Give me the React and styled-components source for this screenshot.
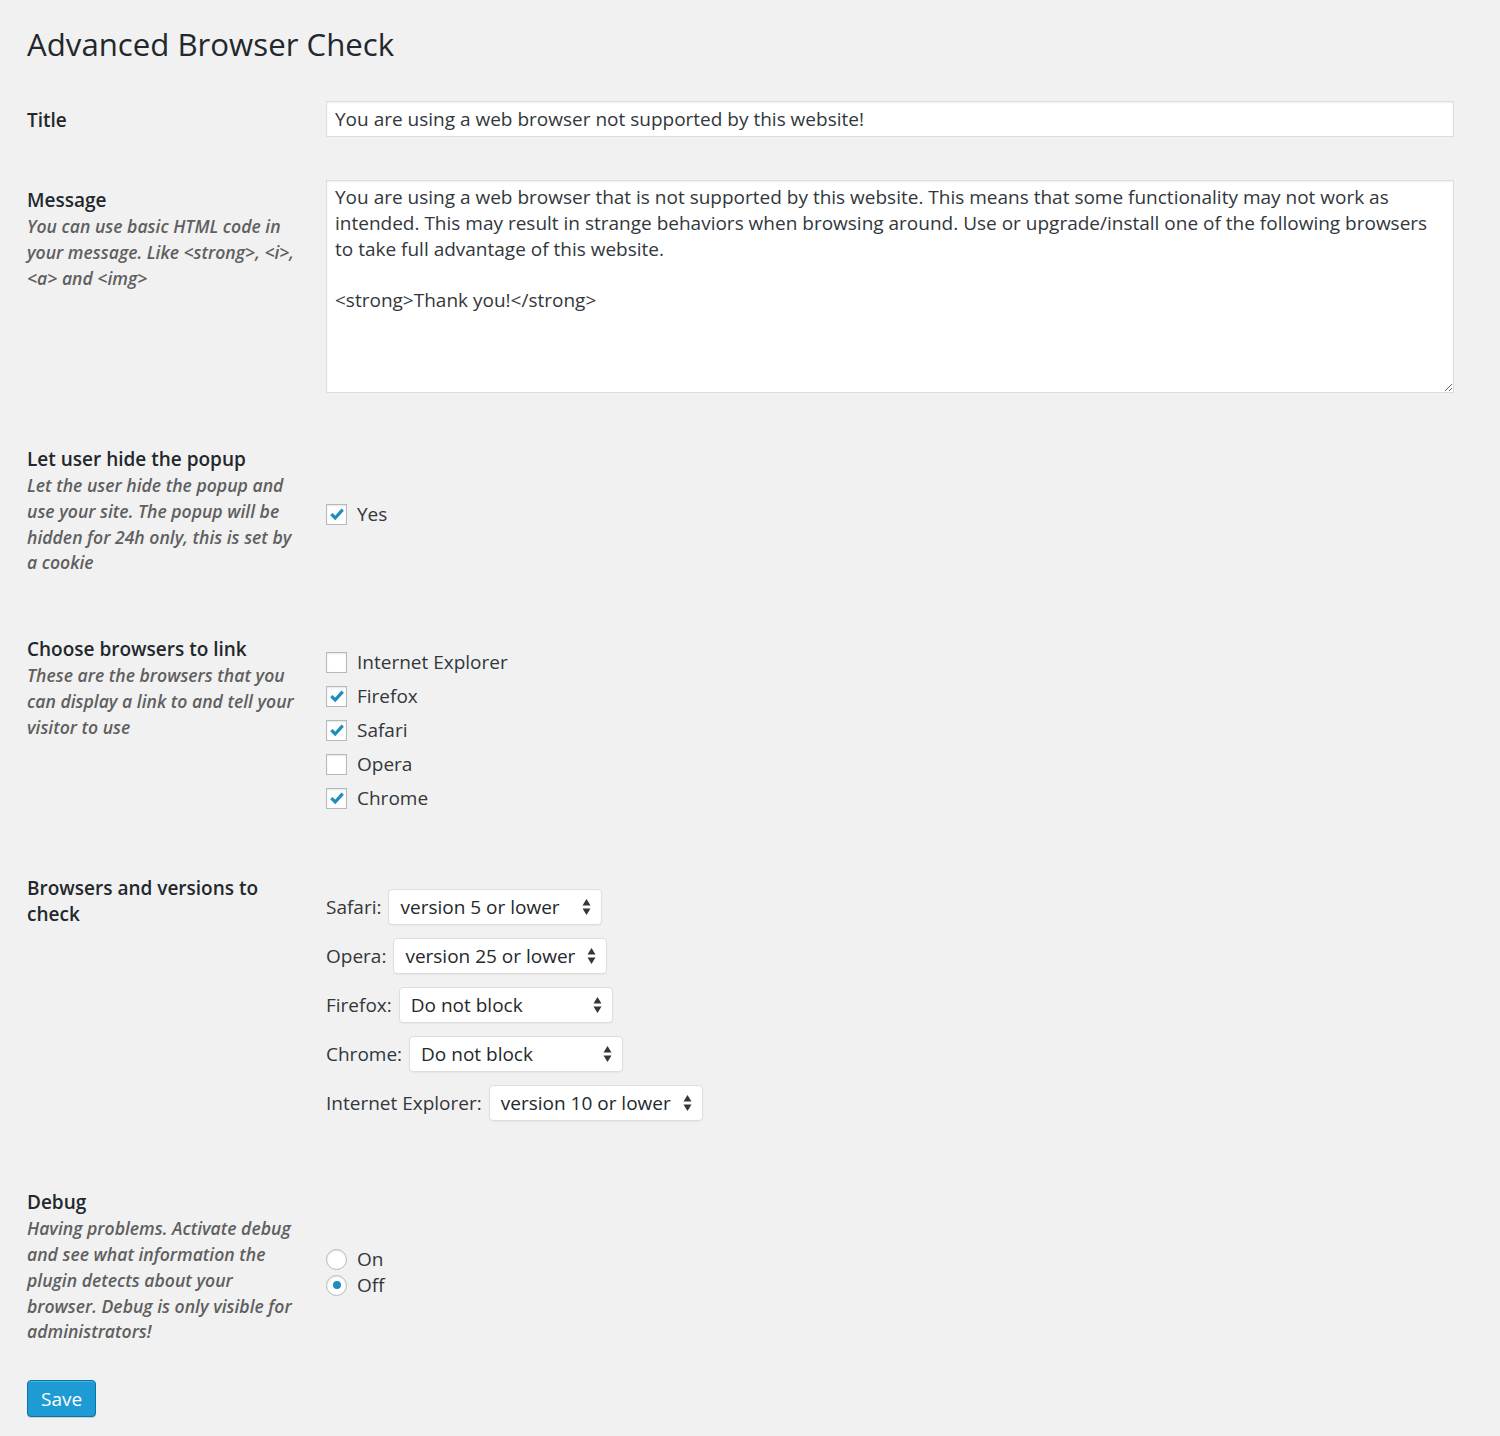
import React from 'react'
import styled, { createGlobalStyle } from 'styled-components'

const GlobalStyle = createGlobalStyle`
  html, body {
    margin: 0;
    padding: 0;
    background: #f1f1f1;
  }
  body {
    font-family: "Open Sans", "DejaVu Sans", sans-serif;
    font-size: 19px;
    color: #32373c;
  }
`

const Wrap = styled.div`
  padding: 0 46px 20px 27px;
`

const Heading = styled.h1`
  margin: 0 0 14px;
  padding-top: 22px;
  font-size: 31.2px;
  line-height: 44px;
  font-weight: 400;
  color: #23282d;
`

const Row = styled.div`
  display: grid;
  grid-template-columns: 299px 1fr;
  align-items: start;
`

const Head = styled.div`
  padding: 27px 29px ${p => p.$pb || 0}px 0;
`

const Label = styled.div`
  font-weight: 600;
  line-height: 26px;
  color: #23282d;
`

const Desc = styled.div`
  margin-top: 1px;
  font-style: italic;
  line-height: 25.8px;
  color: #5f5f5f;
  font-weight: 600;
  font-size: 17.6px;
`

const Field = styled.div`
  padding: ${p => p.$pad || '0'};
  align-self: ${p => p.$center ? 'center' : 'start'};
`

const TextInput = styled.input`
  box-sizing: border-box;
  width: 100%;
  height: 36px;
  margin: 0;
  padding: 0 8px;
  border: 1px solid #ddd;
  box-shadow: inset 0 1px 2px rgba(0, 0, 0, 0.07);
  background: #fff;
  font: inherit;
  color: #32373c;
  outline: none;
`

const TextArea = styled.textarea`
  display: block;
  box-sizing: border-box;
  width: 100%;
  height: 213px;
  margin: 0;
  padding: 4px 8px;
  border: 1px solid #ddd;
  box-shadow: inset 0 1px 2px rgba(0, 0, 0, 0.07);
  background: #fff;
  font: inherit;
  line-height: 25.8px;
  color: #32373c;
  outline: none;
`

const CheckList = styled.div`
  display: flex;
  flex-direction: column;
`

const Option = styled.label`
  display: flex;
  align-items: center;
  gap: 10px;
  height: ${p => p.$h || 34}px;
  line-height: 26px;
  color: #32373c;
`

const Box = styled.span`
  box-sizing: border-box;
  width: 21px;
  height: 21px;
  display: flex;
  align-items: center;
  justify-content: center;
  border: 1px solid #b4b9be;
  border-radius: ${p => p.$round ? '50%' : '0'};
  background: #fff;
  box-shadow: inset 0 1px 2px rgba(0, 0, 0, 0.1);
  flex-shrink: 0;
`

const Dot = styled.span`
  width: 8px;
  height: 8px;
  border-radius: 50%;
  background: #1e8cbe;
`

const SelectList = styled.div`
  display: flex;
  flex-direction: column;
  gap: 13px;
`

const SelectRow = styled.div`
  display: flex;
  align-items: center;
  gap: 7px;
  color: #32373c;
`

const Select = styled.div`
  box-sizing: border-box;
  width: 214px;
  height: 36px;
  display: flex;
  align-items: center;
  justify-content: space-between;
  padding: 0 10px 0 11px;
  border: 1px solid #ddd;
  border-radius: 4px;
  background: #fff;
  box-shadow: 0 1px 1px rgba(0, 0, 0, 0.04);
  color: #23282d;
`

const SaveButton = styled.button`
  margin-top: 26px;
  height: 37px;
  padding: 0 13px;
  border: 1px solid #0a74a8;
  border-radius: 4px;
  background: #1e9ad4;
  box-shadow: inset 0 1px 0 rgba(120, 200, 230, 0.5), 0 1px 0 rgba(0, 0, 0, 0.15);
  color: #fff;
  font: inherit;
  font-size: 19px;
  line-height: 34px;
  cursor: pointer;
`

function Check({ checked }) {
  return (
    <Box>
      {checked && (
        <svg width="16" height="16" viewBox="0 0 16 16">
          <path d="M2.3 8.2 L6.2 12 L13.7 3.6" fill="none" stroke="#1e8cbe" strokeWidth="3.2" strokeLinejoin="miter" />
        </svg>
      )}
    </Box>
  )
}

function Arrows() {
  return (
    <svg width="9" height="18" viewBox="0 0 9 18">
      <path d="M4.5 1 L8.5 7.5 L0.5 7.5 Z" fill="#32373c" />
      <path d="M4.5 17 L8.5 10.5 L0.5 10.5 Z" fill="#32373c" />
    </svg>
  )
}

const message = `You are using a web browser that is not supported by this website. This means that some functionality may not work as intended. This may result in strange behaviors when browsing around. Use or upgrade/install one of the following browsers to take full advantage of this website.

<strong>Thank you!</strong>`

const browsers = [
  { name: 'Internet Explorer', on: false },
  { name: 'Firefox', on: true },
  { name: 'Safari', on: true },
  { name: 'Opera', on: false },
  { name: 'Chrome', on: true },
]

const versions = [
  { name: 'Safari:', value: 'version 5 or lower' },
  { name: 'Opera:', value: 'version 25 or lower' },
  { name: 'Firefox:', value: 'Do not block' },
  { name: 'Chrome:', value: 'Do not block' },
  { name: 'Internet Explorer:', value: 'version 10 or lower' },
]

export default function App() {
  return (
    <Wrap>
      <GlobalStyle />
      <Heading>Advanced Browser Check</Heading>

      <Row>
        <Head>
          <Label>Title</Label>
        </Head>
        <Field $pad="21px 0 23px">
          <TextInput defaultValue="You are using a web browser not supported by this website!" />
        </Field>
      </Row>

      <Row>
        <Head>
          <Label>Message</Label>
          <Desc>You can use basic HTML code in your message. Like &lt;strong&gt;, &lt;i&gt;, &lt;a&gt; and &lt;img&gt;</Desc>
        </Head>
        <Field $pad="20px 0 26px">
          <TextArea defaultValue={message} />
        </Field>
      </Row>

      <Row>
        <Head $pb={33}>
          <Label>Let user hide the popup</Label>
          <Desc>Let the user hide the popup and use your site. The popup will be hidden for 24h only, this is set by a cookie</Desc>
        </Head>
        <Field $center>
          <Option $h={26}>
            <Check checked />
            Yes
          </Option>
        </Field>
      </Row>

      <Row>
        <Head>
          <Label>Choose browsers to link</Label>
          <Desc>These are the browsers that you can display a link to and tell your visitor to use</Desc>
        </Head>
        <Field $pad="36px 0 33px">
          <CheckList>
            {browsers.map(b => (
              <Option key={b.name}>
                <Check checked={b.on} />
                {b.name}
              </Option>
            ))}
          </CheckList>
        </Field>
      </Row>

      <Row>
        <Head>
          <Label>Browsers and versions to check</Label>
        </Head>
        <Field $pad="41px 0">
          <SelectList>
            {versions.map(v => (
              <SelectRow key={v.name}>
                {v.name}
                <Select>
                  <span>{v.value}</span>
                  <Arrows />
                </Select>
              </SelectRow>
            ))}
          </SelectList>
        </Field>
      </Row>

      <Row>
        <Head $pb={9}>
          <Label>Debug</Label>
          <Desc>Having problems. Activate debug and see what information the plugin detects about your browser. Debug is only visible for administrators!</Desc>
        </Head>
        <Field $pad="84px 0 0">
          <Option $h={26}>
            <Box $round />
            On
          </Option>
          <Option $h={26}>
            <Box $round>
              <Dot />
            </Box>
            Off
          </Option>
        </Field>
      </Row>

      <SaveButton>Save</SaveButton>
    </Wrap>
  )
}
